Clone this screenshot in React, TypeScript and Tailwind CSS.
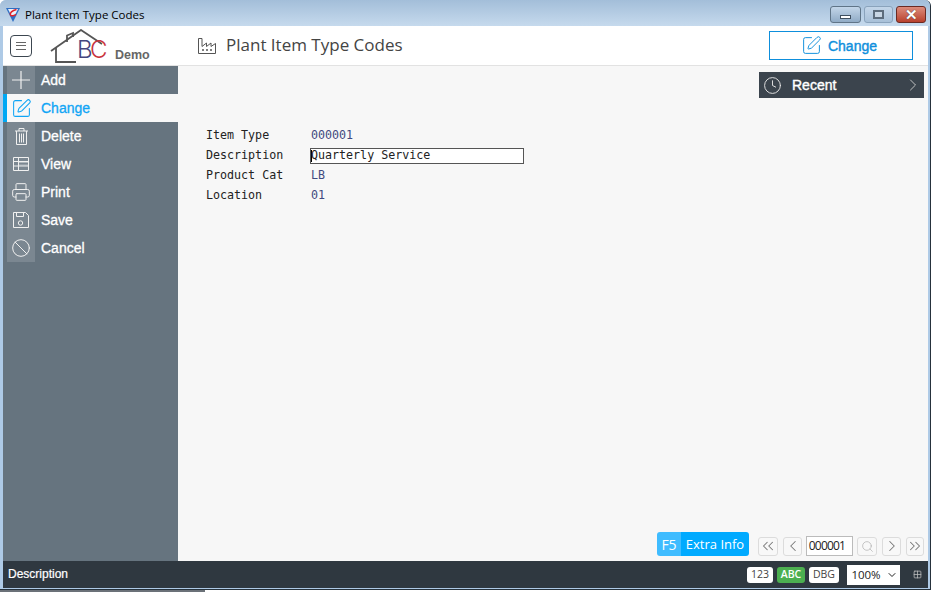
import React from 'react';
import {
	SquarePen,
	Printer,
	Ban,
	Clock,
	ChevronRight,
	ChevronLeft,
	ChevronsLeft,
	ChevronsRight,
	ChevronDown,
	Search,
	Grid2x2,
} from 'lucide-react';

function PlusIcon({ className }: { className?: string }) {
	return (
		<svg viewBox="0 0 18 18" fill="none" stroke="currentColor" strokeWidth="1.2" className={className}>
			<path d="M9 0v18M0 9h18" />
		</svg>
	);
}

function TrashIcon({ className }: { className?: string }) {
	return (
		<svg viewBox="0 0 13 17" fill="none" stroke="currentColor" strokeWidth="1" className={className}>
			<path d="M0 3h13M4 3V.5h5V3M1.500 3v13.500h10V3" />
			<path d="M4.500 5.500v9M6.500 5.500v9M8.500 5.500v9" />
		</svg>
	);
}

function TableIcon({ className }: { className?: string }) {
	return (
		<svg viewBox="0 0 16 14" fill="none" stroke="currentColor" strokeWidth="1" className={className}>
			<path d="M.5.500h15v13H.5zM.5 4.500h15M.5 9h15M5.500.5v13" />
			<path d="M5.500 5.500h10M5.500 8h10" strokeOpacity="0.45" />
		</svg>
	);
}

function SaveIcon({ className }: { className?: string }) {
	return (
		<svg viewBox="0 0 16 16" fill="none" stroke="currentColor" strokeWidth="1" className={className}>
			<path d="M.5.500h12l3 3v12H.5z" />
			<path d="M3.500.5v4h7v-4" />
			<circle cx="7.500" cy="11" r="2.200" />
		</svg>
	);
}

function FactoryIcon({ className }: { className?: string }) {
	return (
		<svg viewBox="0 0 18 16" fill="none" stroke="currentColor" strokeWidth="1" className={className}>
			<path d="M.5 15.500V.5h3.500v8l4.500-3.500v3.500l4.500-3.500v3.500l4.500-3v10z" />
			<path d="M4 12h2M8 12h2M12 12h2" strokeWidth="1.300" />
		</svg>
	);
}

function AppGlyph() {
	return (
		<svg viewBox="0 0 14 14" className="w-[14px] h-[14px] mt-[4px]">
			<path d="M0 0h14L7 14z" fill="#2f6fc4" />
			<path d="M2 1h10L9 7H5z" fill="#eaf2fa" />
			<path d="M10.500 1.500C6 2.500 3.500 5 4.500 7c.7 1.400 3 1 5.500-.6" fill="none" stroke="#e0242c" strokeWidth="1.500" />
		</svg>
	);
}

function Logo() {
	return (
		<div className="flex items-end w-[64px] h-[36px] ml-[18px] mt-[1px]">
			<svg viewBox="0 0 54 35" className="w-[54px] h-[35px] shrink-0" fill="none" stroke="#555" strokeWidth="1.800">
				<path d="M1 22L31 1 52 15" />
				<path d="M6 19v14h20" />
				<path d="M17 13V6.500l6-2.500v4" />
			</svg>
			<span className="-ml-[27px] mb-[-2px] text-[24px] leading-[32px] tracking-[-2.5px] font-light font-['Inter',sans-serif]">
				<span className="text-[#44467e]">B</span>
				<span className="text-[#c9343d]">C</span>
			</span>
		</div>
	);
}

const menu = [
	{ label: 'Add', icon: <PlusIcon className="w-[18px] h-[18px]" /> },
	{ label: 'Change', icon: <SquarePen className="w-[21px] h-[21px]" strokeWidth={1.2} />, active: true },
	{ label: 'Delete', icon: <TrashIcon className="w-[13px] h-[17px]" /> },
	{ label: 'View', icon: <TableIcon className="w-[16px] h-[14px]" /> },
	{ label: 'Print', icon: <Printer className="w-[20px] h-[20px]" strokeWidth={1.2} /> },
	{ label: 'Save', icon: <SaveIcon className="w-[16px] h-[16px]" /> },
	{ label: 'Cancel', icon: <Ban className="w-[20px] h-[20px]" strokeWidth={1.2} /> },
];

const fields = [
	{ label: 'Item Type', value: '000001' },
	{ label: 'Description', value: 'Quarterly Service', input: true },
	{ label: 'Product Cat', value: 'LB' },
	{ label: 'Location', value: '01' },
];

function NavButton({ children, className = 'w-[20px]' }: { children: React.ReactNode; className?: string }) {
	return (
		<div className={`${className} h-[19px] flex items-center justify-center bg-[#f8f8f8] border border-[#dcdcdc] rounded-[3px] text-[#777]`}>
			{children}
		</div>
	);
}

export default function App() {
	return (
		<div className="w-[936px] h-[592px] bg-white overflow-hidden font-['Liberation_Sans',sans-serif]">
			<div className="w-[931px] h-[590px] flex flex-col pl-[3px] pr-[2px] pb-[1px] bg-[#aecae6] border-r border-b border-[#26323c] rounded-t-[6px]">
				{/* Title bar */}
				<div className="h-[26px] -ml-[3px] -mr-[2px] pl-[6px] pr-[4px] shrink-0 flex items-center rounded-t-[6px] bg-gradient-to-b from-[#a3bed9] to-[#c6daed]">
					<AppGlyph />
					<span className="ml-[5px] mt-[4px] text-[11.5px] text-black font-['Open_Sans',sans-serif]">Plant Item Type Codes</span>
					<div className="ml-auto flex items-start gap-[3px] self-start pt-[6px]">
						<div className="w-[31px] h-[17px] flex items-center justify-center rounded-[3px] border border-[#5f7487] bg-gradient-to-b from-[#c3d6e9] to-[#90abc6]">
							<div className="w-[11px] h-[4px] mt-[5px] bg-white border border-[#3f4f5f]"></div>
						</div>
						<div className="w-[29px] h-[17px] flex items-center justify-center rounded-[3px] border border-[#8aa3bc] bg-gradient-to-b from-[#c3d6e9] to-[#a8c0d8]">
							<div className="w-[11px] h-[9px] border-2 border-[#5c6c7c] bg-[#c8d6e4]"></div>
						</div>
						<div className="w-[30px] h-[17px] flex items-center justify-center rounded-[3px] border border-[#6b2a22] bg-gradient-to-b from-[#dc8c7c] to-[#b8402c]">
							<span className="text-white text-[15px] leading-none font-bold [text-shadow:0_0_1px_#222]">✕</span>
						</div>
					</div>
				</div>

				{/* Header */}
				<div className="h-[40px] shrink-0 flex items-center bg-white border-b border-[#e2e2e2]">
					<div className="w-[175px] shrink-0 flex items-center">
						<div className="w-[22px] h-[22px] ml-[7px] flex items-center justify-center rounded-[4px] border border-[#3c4650]">
							<div className="w-[10px] h-[8px] border-y border-[#666] flex items-center">
								<div className="w-full h-px bg-[#666]"></div>
							</div>
						</div>
						<Logo />
						<span className="ml-[1px] mt-[20px] text-[12.5px] font-bold text-[#666]">Demo</span>
					</div>
					<FactoryIcon className="ml-[20px] w-[18px] h-[16px] text-[#555]" />
					<span className="ml-[10px] -mt-[2px] text-[17px] text-[#444] font-['Open_Sans',sans-serif]">Plant Item Type Codes</span>
					<div className="ml-auto mr-[15px] w-[144px] h-[29px] flex items-center justify-center gap-[6px] pr-[4px] border border-[#0e8fdc] text-[#0e8fdc]">
						<SquarePen className="w-[21px] h-[21px]" strokeWidth={1.1} />
						<span className="mt-[2px] text-[14px] [-webkit-text-stroke:0.4px]">Change</span>
					</div>
				</div>

				<div className="flex-1 min-h-0 flex">
					{/* Side menu */}
					<div className="w-[175px] shrink-0 bg-[#66747f]">
						{menu.map((item) =>
							item.active ? (
								<div key={item.label} className="h-[28px] flex items-center bg-[#f7f7f7] border-l-4 border-[#00a8f4] text-[#10a5f5]">
									<div className="w-[28px] flex items-center justify-center">{item.icon}</div>
									<span className="ml-[6px] text-[14px] [-webkit-text-stroke:0.3px]">{item.label}</span>
								</div>
							) : (
								<div key={item.label} className="h-[28px] flex items-center pl-[4px] text-white">
									<div className="w-[28px] h-full flex items-center justify-center bg-[#7b8791] text-[#f0f0f0]">{item.icon}</div>
									<span className="ml-[6px] text-[14px] [-webkit-text-stroke:0.3px]">{item.label}</span>
								</div>
							),
						)}
					</div>

					{/* Main panel */}
					<div className="flex-1 min-w-0 flex flex-col bg-[#f7f7f7]">
						<div className="flex justify-end pt-[6px] pr-[4px]">
							<div className="w-[165px] h-[26px] flex items-center pl-[4px] pr-[1px] bg-[#3b444d] text-white">
								<Clock className="w-[19px] h-[19px] text-[#e4e4e4]" strokeWidth={1.2} />
								<span className="ml-[10px] text-[14px] [-webkit-text-stroke:0.4px]">Recent</span>
								<ChevronRight className="ml-auto w-[20px] h-[20px] text-[#ccc]" strokeWidth={1.1} />
							</div>
						</div>

						<div className="mt-[28px] pl-[28px] text-[11.67px] font-['DejaVu_Sans_Mono',monospace]">
							{fields.map((field) => (
								<div key={field.label} className="h-[20px] flex items-center">
									<span className="w-[104px] text-[#222]">{field.label}</span>
									{field.input ? (
										<div className="w-[214px] h-[16px] flex items-center border border-[#555] bg-white text-[#222]">
											<span className="w-px h-[12px] -mr-px bg-black"></span>
											{field.value}
										</div>
									) : (
										<span className="pl-[1px] text-[#3f4a80]">{field.value}</span>
									)}
								</div>
							))}
						</div>

						<div className="mt-auto mb-[5px] pr-[4px] flex items-end justify-end">
							<div className="h-[24px] flex rounded-[3px] overflow-hidden text-white text-[13px] font-['Open_Sans',sans-serif]">
								<div className="w-[24px] pt-px flex items-center justify-center bg-[#3fbcff] text-[14px]">F5</div>
								<div className="w-[68px] pt-px flex items-center justify-center bg-[#00aaff]">Extra Info</div>
							</div>
							<div className="ml-[9px] flex items-center gap-[4px]">
								<NavButton><ChevronsLeft className="w-[18px] h-[18px] shrink-0" strokeWidth={1.4} /></NavButton>
								<NavButton className="w-[19px] ml-px"><ChevronLeft className="w-[18px] h-[18px] shrink-0" strokeWidth={1.4} /></NavButton>
								<div className="w-[47px] h-[20px] pr-[5px] flex items-center justify-center bg-white border border-[#bbb] text-[12px] tracking-[-0.8px] text-[#222] font-['Open_Sans',sans-serif]">000001</div>
								<NavButton><Search className="w-[13px] h-[13px] text-[#aaa]" strokeWidth={1.2} /></NavButton>
								<NavButton className="w-[19px] ml-px"><ChevronRight className="w-[18px] h-[18px] shrink-0" strokeWidth={1.4} /></NavButton>
								<NavButton className="w-[18px] ml-px"><ChevronsRight className="w-[18px] h-[18px] shrink-0" strokeWidth={1.4} /></NavButton>
							</div>
						</div>
					</div>
				</div>

				{/* Status bar */}
				<div className="h-[27px] shrink-0 flex items-center pl-[5px] bg-[#2f3840] text-white">
					<span className="-mt-[1px] text-[12px] [-webkit-text-stroke:0.2px]">Description</span>
					<div className="ml-auto flex items-center text-[10.5px] font-['Open_Sans',sans-serif]">
						<div className="w-[26px] h-[16px] flex items-center justify-center rounded-[3px] bg-white text-[#444]">123</div>
						<div className="ml-[4px] w-[28px] h-[16px] flex items-center justify-center rounded-[3px] bg-[#4caf50] text-white font-semibold">ABC</div>
						<div className="ml-[4px] w-[30px] h-[16px] flex items-center justify-center rounded-[3px] bg-white text-[#444]">DBG</div>
						<div className="ml-[8px] w-[53px] h-[20px] pl-[2px] flex items-center justify-center gap-[5px] bg-white text-[11.5px] text-[#222]">
							100%
							<ChevronDown className="w-[12px] h-[12px]" strokeWidth={2} />
						</div>
						<Grid2x2 className="ml-[13px] mr-[6px] w-[9px] h-[9px] text-[#c0c0c0]" strokeWidth={2} />
					</div>
				</div>
			</div>
			<div className="h-[2px] flex">
				<div className="w-[205px] bg-[#6b7178]"></div>
			</div>
		</div>
	);
}
